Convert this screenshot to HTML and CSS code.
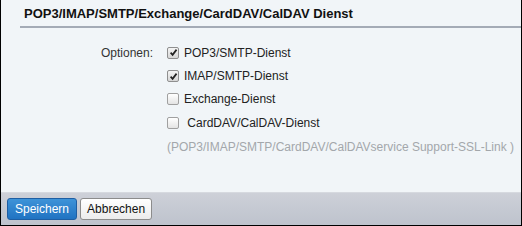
FILE: index.html
```html
<!DOCTYPE html>
<html lang="de">
<head>
    <meta charset="UTF-8">
    <title>Dienste</title>
    <link rel="stylesheet" href="styles.css">
</head>
<body>
    <div class="panel">
        <div class="panel-main">
            <h2 class="panel-title">POP3/IMAP/SMTP/Exchange/CardDAV/CalDAV Dienst</h2>
            <div class="options">
                <div class="options-label">Optionen:</div>
                <div class="options-list">
                    <label class="check">
                        <span class="box checked"><svg viewBox="0 0 10 10" width="9" height="9"><path d="M1.8 5.2 L4 7.6 L8.4 1.8" fill="none" stroke="#222" stroke-width="1.9"/></svg></span>
                        POP3/SMTP-Dienst
                    </label>
                    <label class="check">
                        <span class="box checked"><svg viewBox="0 0 10 10" width="9" height="9"><path d="M1.8 5.2 L4 7.6 L8.4 1.8" fill="none" stroke="#222" stroke-width="1.9"/></svg></span>
                        IMAP/SMTP-Dienst
                    </label>
                    <label class="check">
                        <span class="box"></span>
                        Exchange-Dienst
                    </label>
                    <label class="check">
                        <span class="box"></span>
                        &nbsp;CardDAV/CalDAV-Dienst
                    </label>
                    <div class="note">(POP3/IMAP/SMTP/CardDAV/CalDAVservice Support-SSL-Link )</div>
                </div>
            </div>
        </div>
        <div class="panel-footer">
            <button type="button" class="btn btn-primary">Speichern</button>
            <button type="button" class="btn">Abbrechen</button>
        </div>
    </div>
</body>
</html>
```

FILE: styles.css
```css
body {
    margin: 0;
    font-family: "Liberation Sans", Arial, sans-serif;
    font-size: 12px;
    color: #222;
}

.panel {
    width: 522px;
    height: 226px;
    box-sizing: border-box;
    border: 1px solid #000;
    border-top: none;
    background-color: #f1f5f8;
    display: flex;
    flex-direction: column;
}

.panel-main {
    flex: 1;
}

.panel-title {
    margin: 0 0 0 19px;
    padding-left: 4px;
    height: 26px;
    line-height: 27px;
    font-size: 13px;
    font-weight: bold;
    color: #111;
    border-bottom: 2px solid #a4abb6;
}

.options {
    display: flex;
    gap: 14px;
    margin-top: 13px;
}

.options-label {
    width: 152px;
    text-align: right;
    line-height: 24px;
    color: #333;
}

.options-list {
    display: flex;
    flex-direction: column;
}

.check {
    display: flex;
    align-items: center;
    gap: 5px;
    height: 23.4px;
    color: #222;
}

.box {
    width: 10px;
    height: 10px;
    border: 1px solid #a0a0a0;
    border-radius: 2px;
    background: linear-gradient(#ffffff, #e4e4e4);
    display: flex;
    align-items: center;
    justify-content: center;
}

.box.checked {
    border-color: #8f8f8f;
    background: linear-gradient(#f4f4f4, #d6d6d6);
}

.note {
    height: 24px;
    line-height: 24px;
    color: #a3a7ab;
    font-size: 12px;
}

.panel-footer {
    height: 32px;
    border-top: 1px solid #d6d9df;
    background: linear-gradient(#cdd0d8, #bec3cd);
    display: flex;
    align-items: center;
    gap: 3px;
    padding-left: 6px;
}

.btn {
    height: 22px;
    padding: 0 6px;
    font-family: "Liberation Sans", Arial, sans-serif;
    font-size: 12px;
    color: #111;
    border: 1px solid #8c8c8c;
    border-radius: 3px;
    background: linear-gradient(#ffffff, #ececec);
    cursor: pointer;
}

.btn-primary {
    padding: 0 7px;
    color: #fff;
    border-color: #1e5ea3;
    background: linear-gradient(#3e93d8, #2073c2);
}
```
